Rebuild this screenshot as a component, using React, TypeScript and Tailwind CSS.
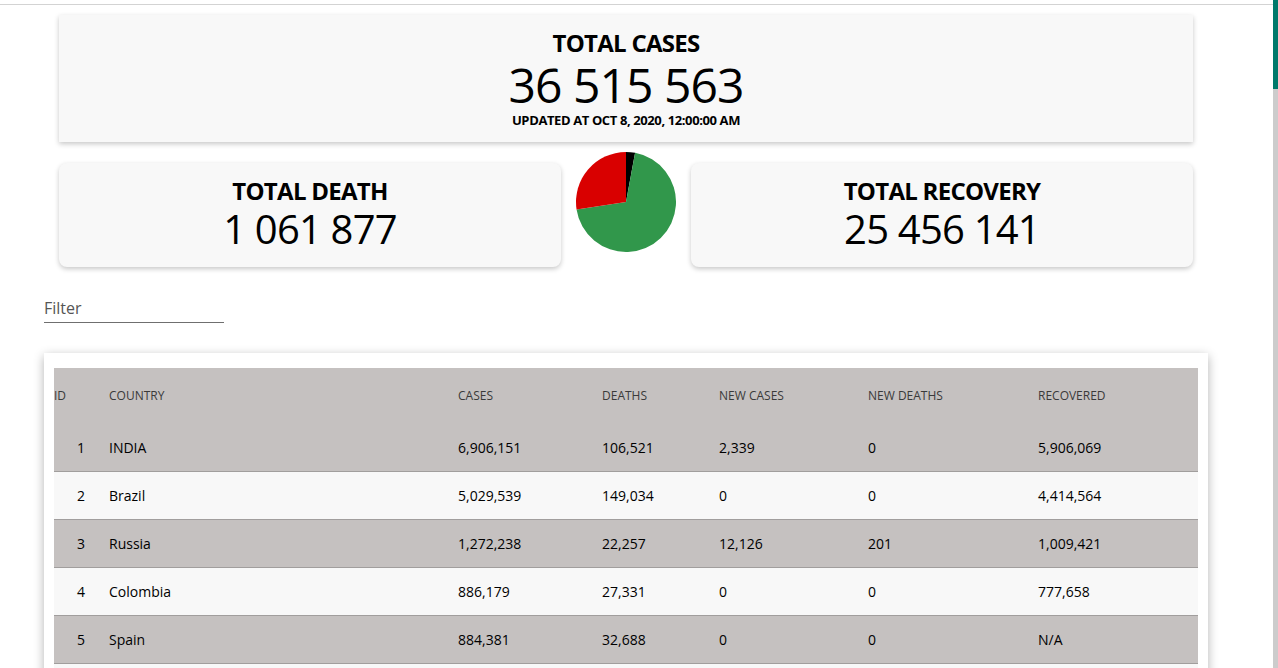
import React from "react";

const rows = [
  { id: 1, country: "INDIA", cases: "6,906,151", deaths: "106,521", newCases: "2,339", newDeaths: "0", recovered: "5,906,069" },
  { id: 2, country: "Brazil", cases: "5,029,539", deaths: "149,034", newCases: "0", newDeaths: "0", recovered: "4,414,564" },
  { id: 3, country: "Russia", cases: "1,272,238", deaths: "22,257", newCases: "12,126", newDeaths: "201", recovered: "1,009,421" },
  { id: 4, country: "Colombia", cases: "886,179", deaths: "27,331", newCases: "0", newDeaths: "0", recovered: "777,658" },
  { id: 5, country: "Spain", cases: "884,381", deaths: "32,688", newCases: "0", newDeaths: "0", recovered: "N/A" },
];

function Pie() {
  return (
    <svg width="100" height="100" viewBox="0 0 100 100" className="block">
      <path d="M50 50 L50 0 A50 50 0 0 1 59.08 0.83 Z" fill="#000000" />
      <path d="M50 50 L59.08 0.83 A50 50 0 1 1 0.56 57.45 Z" fill="#31974b" />
      <path d="M50 50 L0.56 57.45 A50 50 0 0 1 50 0 Z" fill="#d90000" />
    </svg>
  );
}

const gridCols = "grid grid-cols-[47px_349px_144px_117px_149px_170px_168px]";

export default function App() {
  return (
    <div
      className="flex h-[668px] w-[1278px] overflow-hidden bg-white text-black"
      style={{ fontFamily: '"Open Sans", "Noto Sans", sans-serif' }}
    >
      <main className="flex-1 overflow-hidden">
        <div className="h-[4px]" />
        <div className="border-t border-[#d3d3d3]" />
        <div className="ml-[44px] w-[1164px]">
          <div className="mx-[15px] mt-[10px]">
            <section className="flex h-[127px] flex-col items-center bg-[#f8f8f8] pt-[14px] shadow-[0_2px_5px_rgba(0,0,0,0.22)]">
              <h1 className="text-[24px] font-bold leading-[28px] tracking-[-0.03em]">TOTAL CASES</h1>
              <div className="mt-[1px] text-[48px] leading-[54px] tracking-[-0.02em]">36 515 563</div>
              <div className="text-[13px] font-bold leading-[16px] tracking-[-0.03em]">UPDATED AT OCT 8, 2020, 12:00:00 AM</div>
            </section>
            <div className="mt-[10px] flex items-start gap-[15px]">
              <section className="mt-[11px] flex h-[104px] w-[502px] flex-col items-center rounded-lg bg-[#f8f8f8] pt-[14px] shadow-[0_2px_5px_rgba(0,0,0,0.22)]">
                <h2 className="text-[24px] font-bold leading-[28px] tracking-[-0.03em]">TOTAL DEATH</h2>
                <div className="mt-[1px] text-[40px] leading-[46px] tracking-[-0.02em]">1 061 877</div>
              </section>
              <Pie />
              <section className="mt-[11px] flex h-[104px] w-[502px] flex-col items-center rounded-lg bg-[#f8f8f8] pt-[14px] shadow-[0_2px_5px_rgba(0,0,0,0.22)]">
                <h2 className="text-[24px] font-bold leading-[28px] tracking-[-0.03em]">TOTAL RECOVERY</h2>
                <div className="mt-[1px] text-[40px] leading-[46px] tracking-[-0.02em]">25 456 141</div>
              </section>
            </div>
          </div>

          <div className="mt-[29px]">
            <input
              placeholder="Filter"
              className="block h-[27px] w-[180px] border-b border-[#6f6f6f] bg-transparent pb-[2px] text-[16px] leading-[24px] text-black outline-none placeholder:text-[#555]"
            />
          </div>

          <div className="mt-[30px] bg-white px-[10px] pt-[15px] shadow-[0_3px_10px_rgba(0,0,0,0.3)]">
            <div className={`${gridCols} h-[56px] items-center bg-[#c5c1c0] text-[12px] text-[#3a3a3a]`}>
              <div>ID</div>
              <div className="pl-[8px]">COUNTRY</div>
              <div className="pl-[8px]">CASES</div>
              <div className="pl-[8px]">DEATHS</div>
              <div className="pl-[8px]">NEW CASES</div>
              <div className="pl-[8px]">NEW DEATHS</div>
              <div className="pl-[8px]">RECOVERED</div>
            </div>
            {rows.map((r, i) => (
              <div
                key={r.id}
                className={`${gridCols} h-[48px] items-center border-b border-[#a19e9d] text-[14px] ${
                  i % 2 === 0 ? "bg-[#c5c1c0]" : "bg-[#f8f8f8]"
                }`}
              >
                <div className="pr-[16px] text-right">{r.id}</div>
                <div className="pl-[8px]">{r.country}</div>
                <div className="pl-[8px]">{r.cases}</div>
                <div className="pl-[8px]">{r.deaths}</div>
                <div className="pl-[8px]">{r.newCases}</div>
                <div className="pl-[8px]">{r.newDeaths}</div>
                <div className="pl-[8px]">{r.recovered}</div>
              </div>
            ))}
            <div className="h-[48px] bg-[#f8f8f8]" />
          </div>
        </div>
      </main>
      <div className="flex w-[5px] flex-col">
        <div className="h-[89px] bg-[#00796b]" />
        <div className="flex-1 bg-[#cccccc]" />
      </div>
    </div>
  );
}
